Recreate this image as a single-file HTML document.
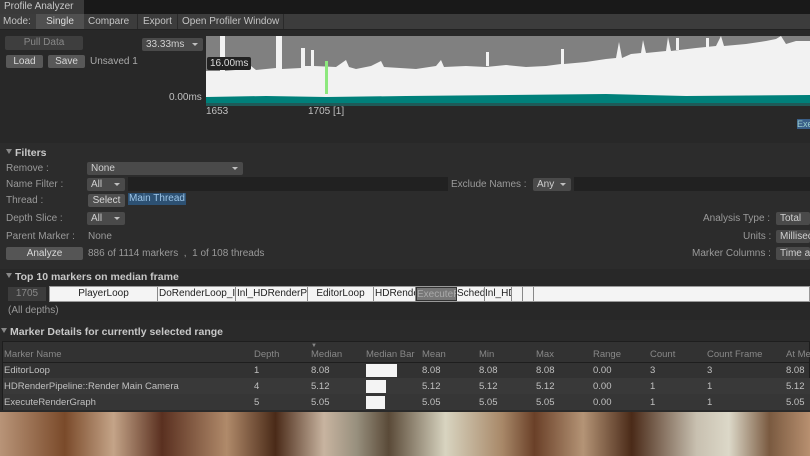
<!DOCTYPE html>
<html><head><style>
*{margin:0;padding:0;box-sizing:border-box}
body{width:810px;height:456px;overflow:hidden;background:#282828;font-family:"Liberation Sans",sans-serif;font-size:10px;color:#c4c4c4;position:relative}
.a{position:absolute;white-space:nowrap}
.btn{position:absolute;background:#585858;color:#d8d8d8;text-align:center;border-radius:2px;line-height:14px}
.dd{position:absolute;background:#4a4a4a;color:#d0d0d0;border-radius:2px;line-height:13px;height:13px;padding-left:4px;white-space:nowrap;overflow:hidden}
.dd.ar:after{content:"";position:absolute;right:5px;top:5px;border:3px solid transparent;border-top:3px solid #c0c0c0}
.lbl{color:#9a9a9a}
.hdr{font-weight:bold;color:#c8c8c8;font-size:10.5px}
.tri{display:inline-block;width:0;height:0;border:3px solid transparent;border-top:5px solid #888;margin-right:3px;vertical-align:-1px}
</style></head><body>
<div class="a" style="left:0;top:0;width:810px;height:14px;background:#191919"></div>
<div class="a" style="left:0;top:0;width:84px;height:14px;background:#3a3a3a;color:#c8c8c8;padding-left:4px;line-height:14px">Profile Analyzer</div>
<div class="a" style="left:0;top:14px;width:810px;height:16px;background:#3c3c3c;border-bottom:1px solid #222"></div>
<div class="a" style="left:3px;top:14px;line-height:15px;color:#c4c4c4">Mode:</div>
<div class="a" style="left:36px;top:14px;width:48px;height:15px;background:#505050;line-height:15px;text-align:center;color:#ddd">Single</div>
<div class="a" style="left:88px;top:14px;line-height:15px">Compare</div>
<div class="a" style="left:137px;top:14px;height:15px;border-left:1px solid #2a2a2a"></div>
<div class="a" style="left:143px;top:14px;line-height:15px">Export</div>
<div class="a" style="left:177px;top:14px;height:15px;border-left:1px solid #2a2a2a"></div>
<div class="a" style="left:182px;top:14px;line-height:15px">Open Profiler Window</div>
<div class="a" style="left:283px;top:14px;height:15px;border-left:1px solid #2a2a2a"></div>

<div class="btn" style="left:5px;top:36px;width:78px;height:14px;background:#3e3e3e;color:#888">Pull Data</div>
<div class="dd ar" style="left:142px;top:38px;width:61px">33.33ms</div>
<div class="btn" style="left:6px;top:55px;width:37px;height:13px;line-height:13px">Load</div>
<div class="btn" style="left:48px;top:55px;width:37px;height:13px;line-height:13px">Save</div>
<div class="a" style="left:90px;top:55px;line-height:13px;color:#aaa">Unsaved 1</div>

<svg class="a" style="left:206px;top:36px" width="604" height="70">
<rect width="604" height="70" fill="#808080"/>
<path fill="#f2f2f2" d="M0,35 L14,35 L14,0 L19,0 L19,35 L40,33 L45,30 L50,34 L70,32 L70,0 L76,0 L76,33 L95,32 L95,12 L99,12 L99,30 L105,30 L105,14 L108,14 L108,30 L130,31 L140,24 L143,31 L150,33 L165,30 L175,25 L178,31 L210,33 L230,30 L235,24 L238,31 L260,30 L280,31 L300,29 L320,31 L340,30 L355,28 L355,13 L358,13 L358,28 L380,26 L400,23 L410,22 L413,6 L416,22 L425,18 L435,17 L437,4 L440,17 L460,15 L462,1 L465,15 L490,12 L510,10 L515,0 L518,10 L540,8 L560,5 L570,3 L575,0 L580,8 L590,5 L604,5 L604,70 L0,70Z"/>
<path fill="#f2f2f2" d="M280,16 L283,16 L283,30 L280,30Z M500,2 L503,2 L503,15 L500,15Z M470,2 L473,2 L473,14 L470,14Z M525,10 L528,10 L528,24 L525,24Z"/>
<path fill="#00807a" d="M0,61 L60,60 L120,61 L200,60 L400,58 L480,60 L604,59 L604,67 L0,67Z"/>
<rect x="0" y="67" width="604" height="3" fill="#1f5a58"/>
<rect x="119" y="25" width="3" height="33" fill="#8de87e"/>
</svg>
<div class="a" style="left:207px;top:57px;background:#222;color:#ddd;padding:0 3px;line-height:13px;border-radius:2px">16.00ms</div>
<div class="a" style="left:169px;top:92px;color:#c0c0c0">0.00ms</div>
<div class="a" style="left:206px;top:106px;color:#c0c0c0">1653</div>
<div class="a" style="left:308px;top:106px;color:#c0c0c0">1705 [1]</div>
<div class="a" style="left:797px;top:119px;width:13px;height:10px;background:#3a5f88;color:#9cc;font-size:9px;line-height:10px;overflow:hidden">Exe</div>

<div class="a" style="left:0;top:143px;width:810px;height:126px;background:#2c2c2c"></div>
<div class="a hdr" style="left:6px;top:147px"><span class="tri"></span>Filters</div>
<div class="a lbl" style="left:6px;top:163px">Remove :</div>
<div class="dd ar" style="left:87px;top:162px;width:156px">None</div>
<div class="a lbl" style="left:6px;top:179px">Name Filter :</div>
<div class="dd ar" style="left:87px;top:178px;width:38px">All</div>
<div class="a" style="left:128px;top:177px;width:320px;height:14px;background:#212121"></div>
<div class="a lbl" style="left:451px;top:179px">Exclude Names :</div>
<div class="dd ar" style="left:533px;top:178px;width:38px">Any</div>
<div class="a" style="left:574px;top:177px;width:236px;height:14px;background:#212121"></div>
<div class="a lbl" style="left:6px;top:195px">Thread :</div>
<div class="btn" style="left:88px;top:194px;width:37px;height:13px;line-height:13px;background:#505050">Select</div>
<div class="a" style="left:128px;top:193px;background:#2d5173;color:#9cc4e6;padding:0 1px;line-height:12px">Main Thread</div>
<div class="a lbl" style="left:6px;top:213px">Depth Slice :</div>
<div class="dd ar" style="left:87px;top:212px;width:38px">All</div>
<div class="a lbl" style="left:703px;top:213px">Analysis Type :</div>
<div class="dd" style="left:776px;top:212px;width:34px">Total</div>
<div class="a lbl" style="left:6px;top:231px">Parent Marker :</div>
<div class="a lbl" style="left:88px;top:231px">None</div>
<div class="a lbl" style="left:743px;top:231px">Units :</div>
<div class="dd" style="left:776px;top:230px;width:34px">Millisec</div>
<div class="btn" style="left:6px;top:247px;width:77px;height:13px;line-height:13px;background:#555">Analyze</div>
<div class="a lbl" style="left:88px;top:248px">886 of 1114 markers &nbsp;, &nbsp;1 of 108 threads</div>
<div class="a lbl" style="left:692px;top:248px">Marker Columns :</div>
<div class="dd" style="left:776px;top:247px;width:34px">Time ar</div>

<div class="a hdr" style="left:6px;top:271px"><span class="tri"></span>Top 10 markers on median frame</div>
<div class="a" style="left:8px;top:287px;width:38px;height:14px;background:#3c3c3c;color:#888;text-align:center;line-height:14px">1705</div>
<div class="a" style="left:49px;top:286px;width:761px;height:16px;background:#f4f4f4;border:1px solid #999"></div>
<div class="a" style="left:50px;top:287px;height:14px;line-height:14px;color:#222;display:flex">
<div style="width:108px;text-align:center;border-right:1px solid #888">PlayerLoop</div>
<div style="width:78px;overflow:hidden;border-right:1px solid #888;padding-left:1px">DoRenderLoop_Internal</div>
<div style="width:72px;overflow:hidden;border-right:1px solid #888;padding-left:1px">Inl_HDRenderPipeline</div>
<div style="width:66px;text-align:center;border-right:1px solid #888">EditorLoop</div>
<div style="width:42px;overflow:hidden;border-right:1px solid #888;padding-left:1px">HDRender</div>
<div style="width:41px;overflow:hidden;background:#777;color:#aaa;border:1px solid #333">ExecuteRG</div>
<div style="width:28px;overflow:hidden;border-right:1px solid #888">Schedule</div>
<div style="width:27px;overflow:hidden;border-right:1px solid #888">Inl_HDR</div>
<div style="width:11px;border-right:1px solid #888"></div>
<div style="width:11px;border-right:1px solid #888"></div>
</div>
<div class="a lbl" style="left:8px;top:305px">(All depths)</div>

<div class="a" style="left:0;top:320px;width:810px;height:92px;background:#2a2a2a"></div>
<div class="a hdr" style="left:1px;top:326px"><span class="tri"></span>Marker Details for currently selected range</div>
<div class="a" style="left:2px;top:341px;width:808px;height:69px;background:#323232;border:1px solid #1e1e1e"></div>
<div class="a" style="left:3px;top:362px;width:807px;height:1px;background:#1e1e1e"></div>
<div class="a" style="left:3px;top:378px;width:807px;height:16px;background:#393939"></div>
<div class="a" style="left:3px;top:394px;width:807px;height:16px;background:#363636"></div>
<div style="font-size:9.5px;color:#888">
<div class="a" style="left:4px;top:349px">Marker Name</div>
<div class="a" style="left:254px;top:349px">Depth</div>
<div class="a" style="left:311px;top:343px;font-size:6px">▼</div>
<div class="a" style="left:311px;top:349px">Median</div>
<div class="a" style="left:366px;top:349px">Median Bar</div>
<div class="a" style="left:422px;top:349px">Mean</div>
<div class="a" style="left:479px;top:349px">Min</div>
<div class="a" style="left:536px;top:349px">Max</div>
<div class="a" style="left:593px;top:349px">Range</div>
<div class="a" style="left:650px;top:349px">Count</div>
<div class="a" style="left:707px;top:349px">Count Frame</div>
<div class="a" style="left:786px;top:349px">At Me</div>
</div>
<div style="font-size:9.5px;color:#c0c0c0">
<div class="a" style="left:4px;top:365px">EditorLoop</div><div class="a" style="left:254px;top:365px">1</div><div class="a" style="left:311px;top:365px">8.08</div>
<div class="a" style="left:366px;top:364px;width:31px;height:13px;background:#f4f4f4"></div>
<div class="a" style="left:422px;top:365px">8.08</div><div class="a" style="left:479px;top:365px">8.08</div><div class="a" style="left:536px;top:365px">8.08</div><div class="a" style="left:593px;top:365px">0.00</div><div class="a" style="left:650px;top:365px">3</div><div class="a" style="left:707px;top:365px">3</div><div class="a" style="left:786px;top:365px">8.08</div>
<div class="a" style="left:4px;top:381px">HDRenderPipeline::Render Main Camera</div><div class="a" style="left:254px;top:381px">4</div><div class="a" style="left:311px;top:381px">5.12</div>
<div class="a" style="left:366px;top:380px;width:20px;height:13px;background:#f4f4f4"></div>
<div class="a" style="left:422px;top:381px">5.12</div><div class="a" style="left:479px;top:381px">5.12</div><div class="a" style="left:536px;top:381px">5.12</div><div class="a" style="left:593px;top:381px">0.00</div><div class="a" style="left:650px;top:381px">1</div><div class="a" style="left:707px;top:381px">1</div><div class="a" style="left:786px;top:381px">5.12</div>
<div class="a" style="left:4px;top:397px">ExecuteRenderGraph</div><div class="a" style="left:254px;top:397px">5</div><div class="a" style="left:311px;top:397px">5.05</div>
<div class="a" style="left:366px;top:396px;width:19px;height:13px;background:#f4f4f4"></div>
<div class="a" style="left:422px;top:397px">5.05</div><div class="a" style="left:479px;top:397px">5.05</div><div class="a" style="left:536px;top:397px">5.05</div><div class="a" style="left:593px;top:397px">0.00</div><div class="a" style="left:650px;top:397px">1</div><div class="a" style="left:707px;top:397px">1</div><div class="a" style="left:786px;top:397px">5.05</div>
</div>

<div class="a" style="left:0;top:412px;width:810px;height:44px;background:linear-gradient(90deg,#b89478 0%,#7a4a2a 8%,#c4a488 14%,#5a3020 20%,#b08a6a 28%,#4a2a18 34%,#c8b4a0 40%,#98907e 44%,#5a4a38 48%,#d8d4c0 55%,#a88868 62%,#6a4028 66%,#b49476 72%,#4a2a18 78%,#c8c0b0 86%,#dcd8c8 90%,#7a5a40 95%,#b89070 100%)"></div>
</body></html>
